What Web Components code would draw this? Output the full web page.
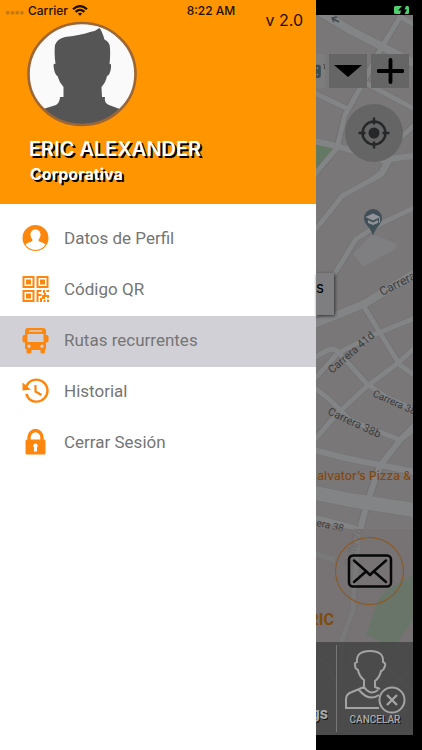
<!DOCTYPE html>
<html lang="es">
<head>
<meta charset="utf-8">
<meta name="viewport" content="width=device-width, initial-scale=1">
<title>Menú</title>
<style>
body{margin:0;background:#000;font-family:Inter,"Liberation Sans",sans-serif}
</style>
</head>
<body>
<ride-app></ride-app>
<script>
const define=(name,html)=>customElements.define(name,class extends HTMLElement{
  constructor(){super();this.attachShadow({mode:'open'}).innerHTML=html;}
});

define('status-bar',`
<style>
:host{display:grid;grid-template-columns:1fr auto 1fr;align-items:center;height:20px;font-size:12px;color:#1c1000;font-weight:500}
.l{display:flex;align-items:center;gap:4px;padding-left:6px}
.r{display:flex;justify-content:flex-end;padding-right:12px}
svg{display:block}
.l svg:first-child{margin-top:6px}
</style>
<div class="l">
<svg width="18" height="4" viewBox="0 0 18 4" fill="#c47a14"><rect y="0" width="3.500" height="3.500" rx="1"/><rect x="4.700" width="3.500" height="3.500" rx="1"/><rect x="9.400" width="3.500" height="3.500" rx="1"/><rect x="14.100" width="3.500" height="3.500" rx="1"/></svg>
<span>Carrier</span>
<svg width="16" height="11" viewBox="0 0 16 11" fill="none" stroke="#1c1000" stroke-width="2.200"><path d="M1 4.200Q8-2 15 4.200M3.600 6.900Q8 3 12.400 6.900"/><path d="M8 10.800 5.800 8.600Q8 6.900 10.200 8.600Z" fill="#1c1000" stroke="none"/></svg>
</div>
<span>8:22 AM</span>
<div class="r"><svg width="16" height="8" viewBox="0 0 16 8"><path d="M1.500 0H8L4 4.500H7L6 8H1.500Q0 8 0 6.500V1.500Q0 0 1.500 0ZM12 0h1.500Q15 0 15 1.500v5Q15 8 13.500 8H10.500l2.500-4.500H10.500Z" fill="#4cd070"/></svg></div>
`);

define('profile-header',`
<style>
:host{display:flex;justify-content:space-between;background:#ff9500;padding:8px 13px 16px 27px;min-height:180px}
.v{font-size:16px;line-height:24px;color:#1c1000}
.avatar{display:block;width:110px;height:106px;margin-top:13px}
h1{margin:9px 0 0 2px;font-size:20px;line-height:26px;font-weight:600;color:#fff;text-shadow:2px 2px 0 #000;white-space:nowrap}
p{margin:0 0 0 3px;font-size:16px;line-height:24px;font-weight:700;color:#fff;text-shadow:2px 2px 0 #000}
</style>
<div>
<svg class="avatar" viewBox="27 21 110 106"><defs><clipPath id="c"><ellipse cx="82" cy="74" rx="53" ry="51"/></clipPath></defs>
<ellipse cx="82" cy="74" rx="53.500" ry="51" fill="#fafafa"/>
<path clip-path="url(#c)" fill="#555" d="M40 130V110L56 105Q60 102 60 97H63.500V87Q59 82 57.500 76Q54 74 53.500 65Q54 63 55.500 64Q54 53 55 45Q57 39 65 37Q82 35 90 32Q96 31 99.500 28Q102 31 104.500 39.500Q110 42 110 48Q110.500 56 109.500 64Q111.500 63 111 68Q110 75 107 76Q106 82 101.500 87L102 97H105Q104 103 109 105L125 111V130Z"/>
<ellipse cx="82" cy="74" rx="53.500" ry="51" fill="none" stroke="#9c6635" stroke-width="2.600"/></svg>
<h1><slot name="name"></slot></h1>
<p><slot name="role"></slot></p>
</div>
<span class="v"><slot name="version"></slot></span>
`);

define('menu-item',`
<style>
:host{display:block}
button{all:unset;box-sizing:border-box;display:flex;align-items:center;gap:15px;width:100%;height:51px;padding:0 0 4px 22px;font-family:Roboto,"Liberation Sans",sans-serif;font-size:17px;line-height:24px;color:#757575;cursor:pointer}
:host([selected]) button{background:#d1d0d7}
::slotted(svg){display:block;width:27px;height:28px;flex:none}
</style>
<button type="button"><slot name="icon"></slot><slot></slot></button>
`);

define('side-drawer',`
<style>
:host{display:block;background:#fff;min-height:100%}
nav{padding-top:10px}
</style>
<profile-header><span slot="name">ERIC ALEXANDER</span><span slot="role">Corporativa</span><span slot="version">v 2.0</span></profile-header>
<nav>
<menu-item><svg slot="icon" viewBox="0 0 27 28"><circle cx="13.500" cy="14" r="13" fill="#fd860e"/><path d="M13.500 5.500c3.500 0 5.200 2.500 5 5.500-.200 2-.900 3.300-1.800 4.300-.500 1.700.200 2.200 1.700 2.800 2.600.900 4.300 1.400 5 2.700-2.300 3.300-5.700 5.200-9.900 5.200s-7.600-1.900-9.900-5.200c.7-1.300 2.400-1.800 5-2.700 1.500-.6 2.200-1.100 1.700-2.800-.9-1-1.600-2.300-1.800-4.300-.2-3 1.500-5.500 5-5.500z" fill="#fff"/></svg>Datos de Perfil</menu-item>
<menu-item><svg slot="icon" viewBox="0 0 27 28"><g fill="none" stroke="#fd860e" stroke-width="2"><path d="M1.500 2h10v10h-10zM15.500 2h10v10h-10zM1.500 16h10v10h-10z"/></g><path fill="#fd860e" d="M4 4.500h5v5H4zM18 4.500h5v5h-5zM4 18.500h5v5H4zM14.500 15h5v2h-3v2h3v2h-3v6h-2zM21 15h2v3h-2zM24.500 15H27v2h-2.500zM20 20h2v-2h2v2h3v3h-2v-1h-2v2h-3zM18 23h2v4h-2zM21.500 25h2v2h-2zM25 24.500h2V27h-2z"/></svg>Código QR</menu-item>
<menu-item selected><svg slot="icon" viewBox="0 0 27 28"><path fill="#fd860e" fill-rule="evenodd" d="M6 2h15q3 0 3 3v4h1q1.500 0 1.500 1.500V15q0 1.500-1.500 1.500h-1V22q0 1-1 1.500V26q0 1.500-1.500 1.500h-1.500q-1.500 0-1.500-1.500v-2h-9v2q0 1.500-1.500 1.500H6Q4.500 27.500 4.500 26v-2.500Q3 23 3 22v-5.500H2Q.5 16.500.5 15v-4.500Q.5 9 2 9h1V5q0-3 3-3zM7 4.200v1.600h13V4.200zM5.500 8v8h16V8zM7 18.500a1.700 1.700 0 1 0 0 3.400 1.700 1.700 0 0 0 0-3.400zm13 0a1.700 1.700 0 1 0 0 3.400 1.700 1.700 0 0 0 0-3.400z"/></svg>Rutas recurrentes</menu-item>
<menu-item><svg slot="icon" viewBox="0 0 27 28"><path d="M4 10A11 11 0 1 1 5.200 20.500" transform="translate(.3 -.5)" fill="none" stroke="#fd860e" stroke-width="2.400"/><path d="M.5 5.500 9 12.800.5 13.500ZM3 17.500l2.500-1 1.600 3-2.600 1z" fill="#fd860e"/><path d="M13.500 8v6.500l6 3.500" fill="none" stroke="#fd860e" stroke-width="2.200"/></svg>Historial</menu-item>
<menu-item><svg slot="icon" viewBox="0 0 27 28"><path d="M7 12V9.500a6.500 7 0 0 1 13 0V12" fill="none" stroke="#fd860e" stroke-width="3.400"/><path fill="#fd860e" fill-rule="evenodd" d="M5 11.500h17q1.500 0 1.500 1.500v12q0 1.500-1.500 1.500H5Q3.500 26.500 3.500 25V13q0-1.500 1.500-1.500zM13.500 15.500a2.300 2.300 0 0 0-1.500 4v4h3v-4a2.300 2.300 0 0 0-1.500-4z"/></svg>Cerrar Sesión</menu-item>
</nav>
`);

define('street-map',`
<style>:host{display:block}svg{display:block;width:100%;height:100%}.edge{stroke:#707172}.fill{stroke:#838485}</style>
<svg viewBox="316 15 97 720" preserveAspectRatio="xMinYMin slice" aria-hidden="true">
<defs><g id="roads" fill="none" stroke-linejoin="round">
<path stroke-width="8" d="M310 6 350 30 420 66"/>
<path stroke-width="5" d="M402 14 380 50 358 92 345 115 337 148 310 180M398 15 420 28M310 91 348 109M360 80 420 112"/>
<path stroke-width="6" d="M310 140 340 147 382 160 420 155M388 160 382 172 372 180"/>
<path stroke-width="5" d="M420 120 395 143M390 160 382 174 342 196 328 214 310 236"/>
<path stroke-width="5" d="M328 284 342 262 356 239 380 224 420 205"/>
<path stroke-width="8" d="M310 326 364 304 420 270"/>
<path stroke-width="5" d="M363 305 385 341 400 365 420 379M420 316 378 333 338 353 310 384"/>
<path stroke-width="5" d="M310 360 328 350Q335 347 340 354L367 384 388 398 420 412M310 445 336 415 366 387 398 363 420 343M310 384 330 400 350 420 390 436 400 440 420 425"/>
<path stroke-width="6" d="M310 449 345 458 385 466 420 473M420 420 400 440 380 466 368 500 360 530"/>
<path stroke-width="14" d="M310 492 350 500 420 511"/>
<path stroke-width="5" d="M310 516 355 528 358 545 354 590 353 610 342 640 341 700M310 552 335 560M365 510 352 556M310 650 328 665 343 700M388 668 420 700M388 690 410 670"/>
</g></defs>
<path fill="#7a7778" d="M316 15h97v720h-97z"/>
<path fill="#637963" d="M310 141 333 149 328 164 310 183Z"/>
<path fill="#7f7f82" d="m372 234 26 10-3 5-32 18-10-13z"/>
<g class="edge"><use href="#roads" x="-1"/><use href="#roads" x="1"/></g>
<use class="fill" href="#roads"/>
<path fill="#5b7b5f" d="M378 600 386 590 413 575V620L394 648 366 635Z"/>
<path d="m339 22-7-4m5-1-5 1 2 4" fill="none" stroke="#464a50" stroke-width="1.500"/>
<path fill="#414f58" d="M373 236c-2-9-9-11-9-18a9 9 0 0 1 18 0c0 7-7 9-9 18z"/>
<path fill="#909497" d="m365.500 217 7.500-3.500 7.500 3.500-7.500 3.500zM368 220l5 2.500 5-2.500v3l-5 2-5-2zM379 218h1v5h-1z"/>
<g fill="#3b3c3e" font-family="Roboto, 'Liberation Sans', sans-serif" font-size="11">
<text font-size="12" transform="translate(382 296) rotate(-27)">Carrera</text>
<text transform="translate(332 374) rotate(-41)">Carrera 41d</text>
<text font-size="10" transform="translate(372 396) rotate(24)">Carrera 38</text>
<text transform="translate(327 414) rotate(25)">Carrera 38b</text>
<text font-size="10" transform="translate(316 526) rotate(12)">era 38</text>
<text fill="#636465" font-size="11" transform="translate(351 567) rotate(-73)">Calle 76</text>
<text fill="#824711" font-size="12" font-weight="500" font-family="Inter, 'Liberation Sans', sans-serif" x="411" y="480" text-anchor="end">alvator’s Pizza &amp;</text>
</g>
</svg>
`);

define('map-view',`
<style>
:host{display:grid;background:#000;padding:15px 9px 15px 0;box-sizing:border-box;min-width:0}
street-map,.ui{grid-area:1/1;min-width:0;min-height:0}
street-map{contain:size}
.ui{display:flex;flex-direction:column;min-height:720px;position:relative}
button{all:unset;display:grid;place-items:center;cursor:pointer;box-sizing:border-box}
svg{display:block}
.map{flex:1;padding-top:39px}
.bar{display:flex;justify-content:flex-end;gap:4px;padding-right:4px}
.bar button{width:38px;height:34px;background:#656565;flex:none}
.field{flex:1;height:34px;background:#7d7d7e;display:flex;align-items:center;overflow:hidden}
.loc{width:58px;height:58px;border-radius:50%;background:#656565;margin:16px 10px 0 auto}
.tip{width:18px;height:42px;box-sizing:border-box;background:#7e7e80;box-shadow:1px 1px 3px #333;margin-top:111px;font-size:15px;line-height:30px;color:#000}
.info{height:113px;box-sizing:border-box;background:#74717299;padding-top:8px}
.mail{width:69px;height:68px;border:1px solid #8c571c;border-radius:50%;margin:0 9px 0 auto}
.who{width:18px;overflow:hidden;display:flex;justify-content:flex-end;font-family:Roboto,"Liberation Sans",sans-serif;font-size:16px;line-height:20px;font-weight:700;color:#7f4c0c;margin-top:5px}
.foot{height:93px;background:#464646e6;display:flex;align-items:stretch}
.log{width:12px;margin-right:8px;overflow:hidden;display:flex;justify-content:flex-end;align-items:flex-end;font-family:Roboto,"Liberation Sans",sans-serif;font-size:16px;line-height:24px;padding-bottom:9px;font-weight:700;color:#aaa;text-shadow:1px 1px #111}
.cancel{flex:1;min-width:0;border-left:1px solid #777;margin:3px 0;font-family:Roboto,"Liberation Sans",sans-serif;font-size:10px;line-height:12px;font-weight:500;color:#aaa;text-shadow:1px 1px #111;align-content:start;padding-top:5px}
</style>
<street-map></street-map>
<div class="ui">
<div class="map">
<div class="bar">
<div class="field"><svg width="13" height="34" viewBox="0 0 13 34"><rect x="-10" y="8" width="17" height="19" rx="3" fill="#3e4c54"/><path d="M1 13h2M1 22h2" stroke="#84898c" stroke-width="2"/><path d="m11 7 2 3-1 4" fill="none" stroke="#222"/></svg></div>
<button type="button" aria-label="Desplegar"><svg width="28" height="14" viewBox="0 0 28 14"><path d="M0 1h28L14 13Z"/></svg></button>
<button type="button" aria-label="Agregar"><svg width="27" height="26" viewBox="0 0 27 26"><path d="M1.500 13h24M13.500 2v22" stroke="#000" stroke-width="3.800" stroke-linecap="round"/></svg></button>
</div>
<button class="loc" type="button" aria-label="Ubicación"><svg width="32" height="32" viewBox="0 0 32 32"><circle cx="16" cy="16" r="11.500" fill="none" stroke="#252729" stroke-width="2.400"/><circle cx="16" cy="16" r="5.500" fill="#252729"/><path d="M16 .5v7M16 24.500v7M.5 16h7M24.500 16h7" stroke="#252729" stroke-width="2.400"/></svg></button>
<div class="tip">s</div>
</div>
<div class="info">
<button class="mail" type="button" aria-label="Mensaje"><svg width="46" height="34" viewBox="0 0 46 34" fill="none" stroke="#070707" stroke-width="2.500" stroke-linecap="round" stroke-linejoin="round"><rect x="2" y="1.500" width="42" height="31" rx="4"/><path d="M7 6.500 20 18l3 3 3-3L39 6.500M7 28 19 17.500M39 28 27 17.500"/></svg></button>
<div class="who">RIC</div>
</div>
<div class="foot">
<div class="log">gs</div>
<button class="cancel" type="button"><svg width="62" height="64" viewBox="0 0 62 64" fill="none" stroke="#a3a3a3" stroke-width="2"><path d="M35 58H2V49Q2 44 8 42L20 37V30Q15 26 14 20Q11 19 11 15Q10 13 13 12Q12 1 26 1T39 12Q42 13 41 16Q40 20 37 21Q36 27 31 31V37L36 39M20 37Q26 46 34 40M15 40Q25 52 35 45"/><circle cx="48" cy="50" r="12.500" fill="#464646"/><path d="m43 45 10 10m0-10L43 55" stroke-width="2.400"/></svg><span>CANCELAR</span></button>
</div>
</div>
`);

define('ride-app',`
<style>
:host{display:grid;grid-template-columns:1fr 106px;min-height:100vh;position:relative}
side-drawer{min-width:0}
status-bar{position:absolute;inset:0 0 auto 0}
</style>
<side-drawer></side-drawer>
<map-view></map-view>
<status-bar></status-bar>
`);
</script>
</body>
</html>
